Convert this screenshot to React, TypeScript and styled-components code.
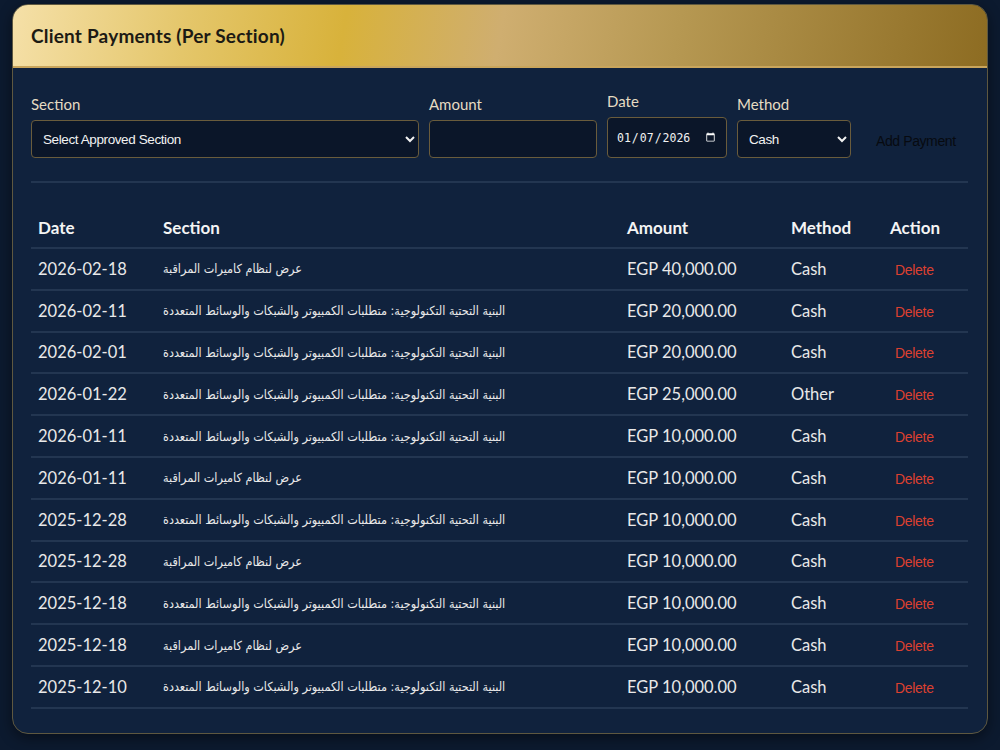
import React from "react";
import styled, { createGlobalStyle } from "styled-components";

const Global = createGlobalStyle`
  html, body { margin: 0; padding: 0; background: #0c1a2f; }
  body { font-family: Lato, "Noto Sans", sans-serif; }
  * { box-sizing: border-box; }
`;

const Page = styled.div`
  padding: 4px 12px 17px 12px;
  background: #0c1a2f;
  min-height: 750px;
`;

const Card = styled.section`
  background: #10223d;
  border: 1px solid #5e5840;
  border-radius: 16px;
  overflow: hidden;
  box-shadow: 0 4px 14px rgba(0, 0, 0, 0.45);
`;

const Header = styled.header`
  height: 63px;
  display: flex;
  align-items: center;
  padding: 0 18px;
  background: linear-gradient(
    100deg,
    #f5e0a8 0%,
    #e4c66a 18%,
    #d8b23b 34%,
    #cfae70 50%,
    #b69852 68%,
    #8d6c22 100%
  );
  border-bottom: 2px solid #c9a55c;
`;

const Title = styled.h2`
  margin: 0;
  font-family: Lato, "Noto Sans", sans-serif;
  font-weight: 700;
  font-size: 19px;
  color: #1c1a14;
  letter-spacing: 0.2px;
`;

const Body = styled.div`
  padding: 24px 19px 24px 18px;
`;

const Form = styled.form`
  display: grid;
  grid-template-columns: 388px 168px 120px 114px auto;
  column-gap: 10px;
  align-items: end;
  padding-bottom: 23px;
  border-bottom: 2px solid #233651;
`;

const Field = styled.label`
  display: flex;
  flex-direction: column;
  gap: 7px;
`;

const LabelText = styled.span`
  font-size: 15px;
  color: #e6dcc3;
  line-height: 18px;
`;

const controlBase = `
  height: 38px;
  background: #0b1629;
  border: 1px solid #6a5c3c;
  border-radius: 4px;
  color: #f2f2f2;
  padding: 0 10px;
  color-scheme: dark;
  outline: none;
`;

const Select = styled.select`
  ${controlBase}
  font-family: "Liberation Sans Narrow", "Liberation Sans", sans-serif;
  font-size: 13.5px;
  letter-spacing: -0.4px;
  padding-left: 7px;
`;

const Input = styled.input`
  ${controlBase}
  font-size: 14px;
`;

const DateInput = styled.input`
  ${controlBase}
  height: 41px;
  font-family: "DejaVu Sans Mono", monospace;
  font-size: 11.5px;
  padding: 0 8px;
`;

const AddButton = styled.button`
  background: transparent;
  border: none;
  color: #070a10;
  font-family: "Liberation Sans Narrow", "Liberation Sans", sans-serif;
  font-size: 14px;
  letter-spacing: -0.4px;
  height: 38px;
  padding: 3px 0 0 15px;
  text-align: left;
  cursor: pointer;
`;

const Table = styled.table`
  width: 100%;
  border-collapse: collapse;
  margin-top: 22px;
`;

const Th = styled.th<{ $w?: number }>`
  text-align: left;
  font-weight: 700;
  font-size: 17px;
  color: #f4f4f4;
  padding: 12px 7px 9px 7px;
  border-bottom: 2px solid #233651;
  width: ${(p) => (p.$w ? `${p.$w}px` : "auto")};
`;

const Td = styled.td`
  height: 41.8px;
  padding: 0 7px;
  font-size: 16.5px;
  color: #e9e9e9;
  border-bottom: 2px solid #233651;
  white-space: nowrap;
`;

const ArabicTd = styled(Td)`
  font-family: "DejaVu Sans Condensed", "Noto Sans", sans-serif;
  font-size: 12.5px;
  letter-spacing: -0.4px;
`;

const DeleteLink = styled.span`
  display: inline-block;
  padding-left: 5px;
  color: #dc4030;
  font-family: "Liberation Sans Narrow", "Liberation Sans", sans-serif;
  font-size: 14px;
  letter-spacing: -0.3px;
  cursor: pointer;
`;

const CAM = "عرض لنظام كاميرات المراقبة";
const INFRA =
  "البنية التحتية التكنولوجية: متطلبات الكمبيوتر والشبكات والوسائط المتعددة";

const rows: [string, string, string, string][] = [
  ["2026-02-18", CAM, "EGP 40,000.00", "Cash"],
  ["2026-02-11", INFRA, "EGP 20,000.00", "Cash"],
  ["2026-02-01", INFRA, "EGP 20,000.00", "Cash"],
  ["2026-01-22", INFRA, "EGP 25,000.00", "Other"],
  ["2026-01-11", INFRA, "EGP 10,000.00", "Cash"],
  ["2026-01-11", CAM, "EGP 10,000.00", "Cash"],
  ["2025-12-28", INFRA, "EGP 10,000.00", "Cash"],
  ["2025-12-28", CAM, "EGP 10,000.00", "Cash"],
  ["2025-12-18", INFRA, "EGP 10,000.00", "Cash"],
  ["2025-12-18", CAM, "EGP 10,000.00", "Cash"],
  ["2025-12-10", INFRA, "EGP 10,000.00", "Cash"],
];

export default function App() {
  return (
    <Page>
      <Global />
      <Card>
        <Header>
          <Title>Client Payments (Per Section)</Title>
        </Header>
        <Body>
          <Form onSubmit={(e) => e.preventDefault()}>
            <Field>
              <LabelText>Section</LabelText>
              <Select defaultValue="">
                <option value="">Select Approved Section</option>
                <option value="1">{CAM}</option>
                <option value="2">{INFRA}</option>
              </Select>
            </Field>
            <Field>
              <LabelText>Amount</LabelText>
              <Input type="number" />
            </Field>
            <Field>
              <LabelText>Date</LabelText>
              <DateInput type="date" defaultValue="2026-01-07" />
            </Field>
            <Field>
              <LabelText>Method</LabelText>
              <Select defaultValue="Cash">
                <option>Cash</option>
                <option>Bank Transfer</option>
                <option>Other</option>
              </Select>
            </Field>
            <AddButton type="submit">Add Payment</AddButton>
          </Form>
          <Table>
            <thead>
              <tr>
                <Th $w={125}>Date</Th>
                <Th $w={464}>Section</Th>
                <Th $w={164}>Amount</Th>
                <Th $w={99}>Method</Th>
                <Th>Action</Th>
              </tr>
            </thead>
            <tbody>
              {rows.map((r, i) => (
                <tr key={i}>
                  <Td>{r[0]}</Td>
                  <ArabicTd>{r[1]}</ArabicTd>
                  <Td>{r[2]}</Td>
                  <Td>{r[3]}</Td>
                  <Td>
                    <DeleteLink>Delete</DeleteLink>
                  </Td>
                </tr>
              ))}
            </tbody>
          </Table>
        </Body>
      </Card>
    </Page>
  );
}
